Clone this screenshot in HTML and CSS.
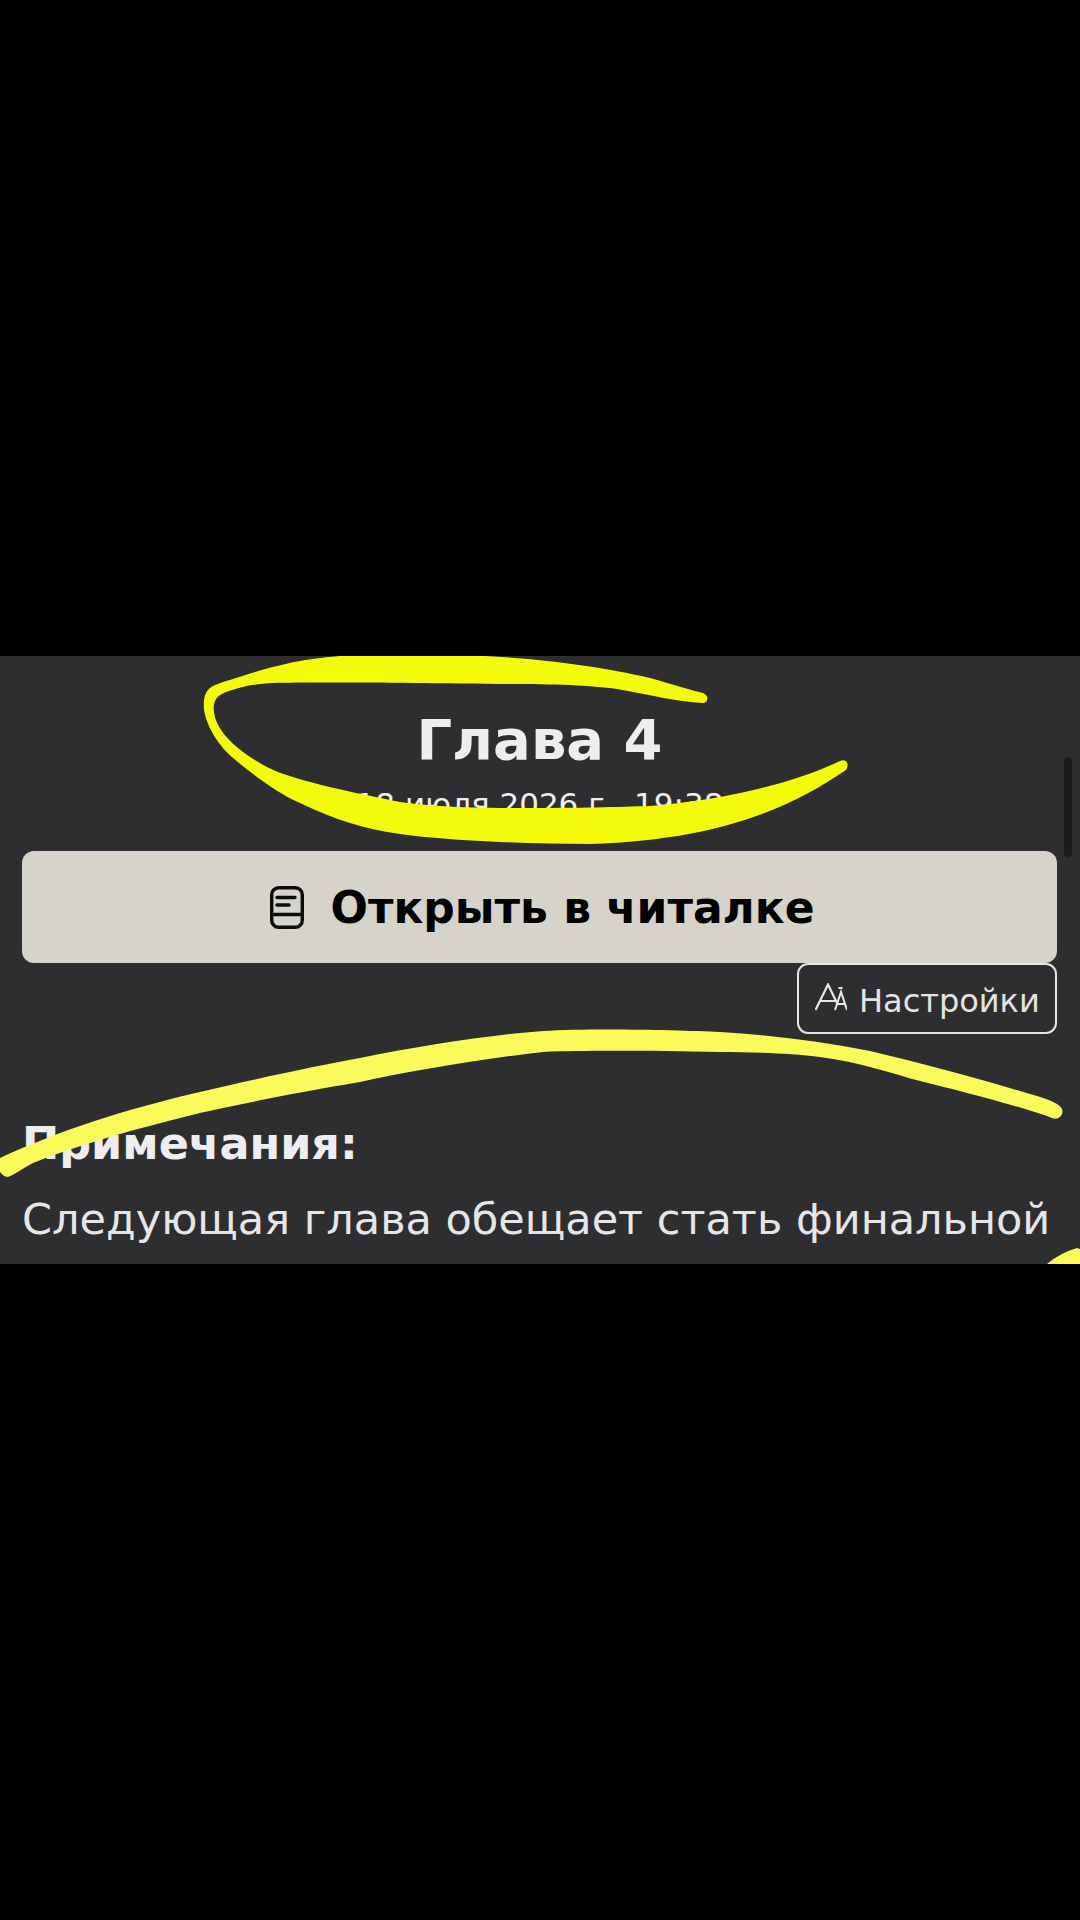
FILE: index.html
```html
<!DOCTYPE html>
<html lang="ru">
<head>
<meta charset="utf-8">
<title>Глава 4</title>
<link rel="stylesheet" href="styles.css">
</head>
<body>
<main class="panel">
  <header class="head">
    <h1 class="title">Глава 4</h1>
    <p class="date">18 июля 2026 г., 19:38</p>
  </header>
  <a class="read">
    <svg class="book" viewBox="272 885 34 43" aria-hidden="true">
      <rect x="273.7" y="886.7" width="30.6" height="39.6" rx="7" />
      <path d="M273.7 913.5H304.3M279 896.5H297M279 904H291" />
    </svg>
    <span>Открыть в читалке</span>
  </a>
  <div class="tools">
    <a class="settings">
      <svg class="aa" viewBox="815 982 32 28" aria-hidden="true">
        <path d="M815.5 1009L828 983.5L837.5 1003M820 1000H835" />
        <path class="thin" d="M835 1009L841 991L847 1009M837 1003H845M838.5 987H842.5" />
      </svg>
      <span class="settings-label">Настройки</span>
    </a>
  </div>
  <h2 class="notes-title">Примечания:</h2>
  <p class="notes">Следующая глава обещает стать финальной</p>
  <div class="scrollbar"></div>
  <svg class="ink" viewBox="0 656 1080 608" aria-hidden="true">
    <path class="ink-strong" d="M204 710C203 698 205 689 215 685C218 684 220 683 223 682C250 674 285 660 340 656C380 654 420 654 460 655C530 657 600 666 650 678C675 685 690 690 703 693C709 695 709 703 702 703C680 702 650 695 617 689C590 685 550 684 500 684C400 683 320 682 273 683C250 684 232 689 222 694C214 698 213 706 214 712C216 730 235 750 267 767C290 779 340 790 400 802C430 806 460 808 520 808C580 808 620 807 650 806C720 800 790 785 840 761C846 758 850 764 846 770C790 808 720 840 590 844C560 844 530 843 500 842C460 840 430 838 400 834C365 829 335 820 300 803C275 792 250 772 233 758C220 747 207 728 204 710Z" />
    <path class="ink-soft" d="M0 1158C60 1130 130 1108 200 1092C260 1078 320 1065 360 1058C420 1046 490 1035 543 1031C590 1028 680 1030 720 1032C770 1035 820 1041 870 1051C930 1065 990 1082 1037 1096C1050 1100 1060 1104 1062 1109C1064 1116 1058 1120 1052 1118C1020 1106 960 1091 920 1081C890 1073 860 1062 820 1057C790 1053 750 1052 720 1052C660 1051 590 1050 543 1052C490 1058 420 1069 360 1082C300 1092 250 1102 200 1113C130 1130 70 1148 33 1163C20 1170 14 1175 8 1177C4 1177 2 1174 0 1172Z" />
    <path class="ink-soft" d="M1047 1264Q1054 1258 1062 1254Q1070 1250 1077 1248L1080 1249V1264Z" />
  </svg>
</main>
</body>
</html>
```
FILE: styles.css
```css
* { box-sizing: border-box; }
html, body { margin: 0; height: 100%; }
body {
  background: #000;
  padding-top: 656px;
  font-family: "DejaVu Sans", sans-serif;
}
.panel {
  position: relative;
  height: 608px;
  overflow: hidden;
  background: #2e2e30;
  padding: 0 23px 0 22px;
}
.head {
  height: 195px;
  padding-top: 52px;
  text-align: center;
  color: #eeeef0;
}
.title {
  margin: 0;
  font-size: 56px;
  line-height: 64px;
  font-weight: 700;
}
.date {
  margin: 12px 0 0;
  font-size: 31px;
  line-height: 40px;
}
.read {
  display: flex;
  align-items: center;
  justify-content: center;
  gap: 26px;
  height: 112px;
  padding-left: 6px;
  border-radius: 12px;
  background: #d5d3ca;
  color: #000;
  font-size: 44px;
  font-weight: 700;
}
.book { width: 34px; height: 43px; flex: none; }
.book rect, .book path {
  fill: none;
  stroke: #0b0b0b;
  stroke-width: 3.4;
  stroke-linecap: round;
}
.tools { display: flex; justify-content: flex-end; }
.settings {
  display: flex;
  align-items: center;
  gap: 12px;
  width: 260px;
  height: 71px;
  padding-left: 16px;
  border: 2px solid #e6e6e6;
  border-radius: 11px;
  color: #e4e4e4;
  font-size: 32px;
}
.settings-label { padding-top: 4px; }
.aa { width: 32px; height: 28px; flex: none; margin-top: -4px; }
.aa path {
  fill: none;
  stroke: #e8e8e8;
  stroke-width: 2.2;
}
.aa .thin { stroke-width: 2; }
.notes-title {
  margin: 83px 0 0;
  font-size: 44.5px;
  line-height: 54px;
  font-weight: 700;
  color: #eeeef0;
}
.notes {
  margin: 21px 0 0;
  font-size: 43px;
  line-height: 54px;
  white-space: nowrap;
  color: #e6e6e8;
}
.scrollbar {
  position: absolute;
  right: 8px;
  top: 101px;
  width: 8px;
  height: 100px;
  border-radius: 4px;
  background: #1b1b1d;
}
.ink {
  position: absolute;
  inset: 0;
  width: 100%;
  height: 100%;
  pointer-events: none;
}
.ink-strong { fill: #f4fb0a; }
.ink-soft { fill: #fafb5a; }
```
